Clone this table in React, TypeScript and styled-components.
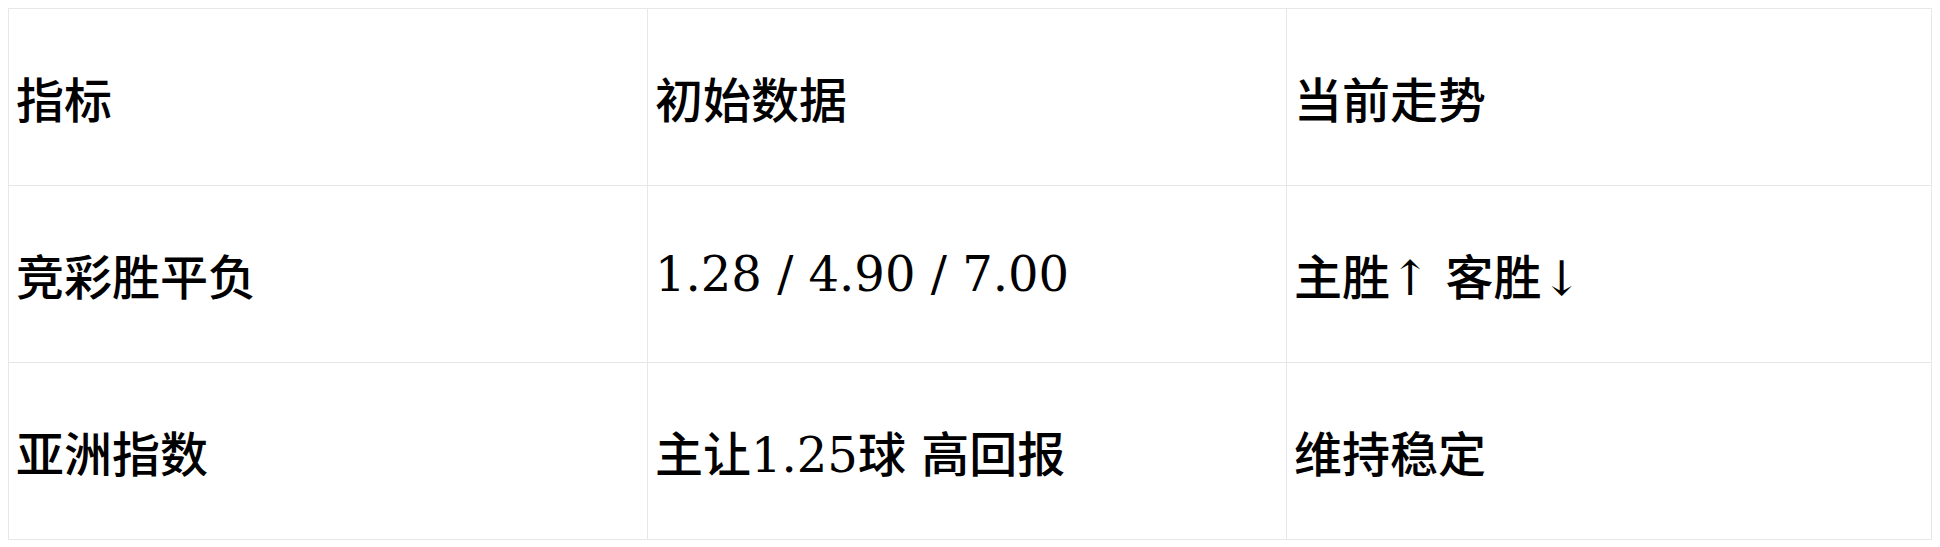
import styled, { createGlobalStyle } from "styled-components";

const GlobalStyle = createGlobalStyle`
  body {
    margin: 8px;
    background: #ffffff;
    color: #000000;
    font-family: "DejaVu Serif", "Noto Sans CJK SC", serif;
  }
`;

const Table = styled.table`
  width: 1924px;
  border-collapse: collapse;
  table-layout: fixed;
  font-size: 48px;
  font-weight: 500;
`;

const Row = styled.tr`
  height: 177px;
`;

const Cell = styled.td<{ $width?: number }>`
  width: ${(p) => (p.$width ? `${p.$width}px` : "auto")};
  border: 1px solid #e5e7eb;
  padding: 0 7px;
  vertical-align: middle;
  text-align: left;
`;

const rows = [
  ["指标", "初始数据", "当前走势"],
  ["竞彩胜平负", "1.28 / 4.90 / 7.00", "主胜↑ 客胜↓"],
  ["亚洲指数", "主让1.25球 高回报", "维持稳定"],
];

export default function App() {
  return (
    <>
      <GlobalStyle />
      <Table>
        <tbody>
          {rows.map((r, i) => (
            <Row key={i}>
              <Cell $width={624}>{r[0]}</Cell>
              <Cell $width={624}>{r[1]}</Cell>
              <Cell>{r[2]}</Cell>
            </Row>
          ))}
        </tbody>
      </Table>
    </>
  );
}
